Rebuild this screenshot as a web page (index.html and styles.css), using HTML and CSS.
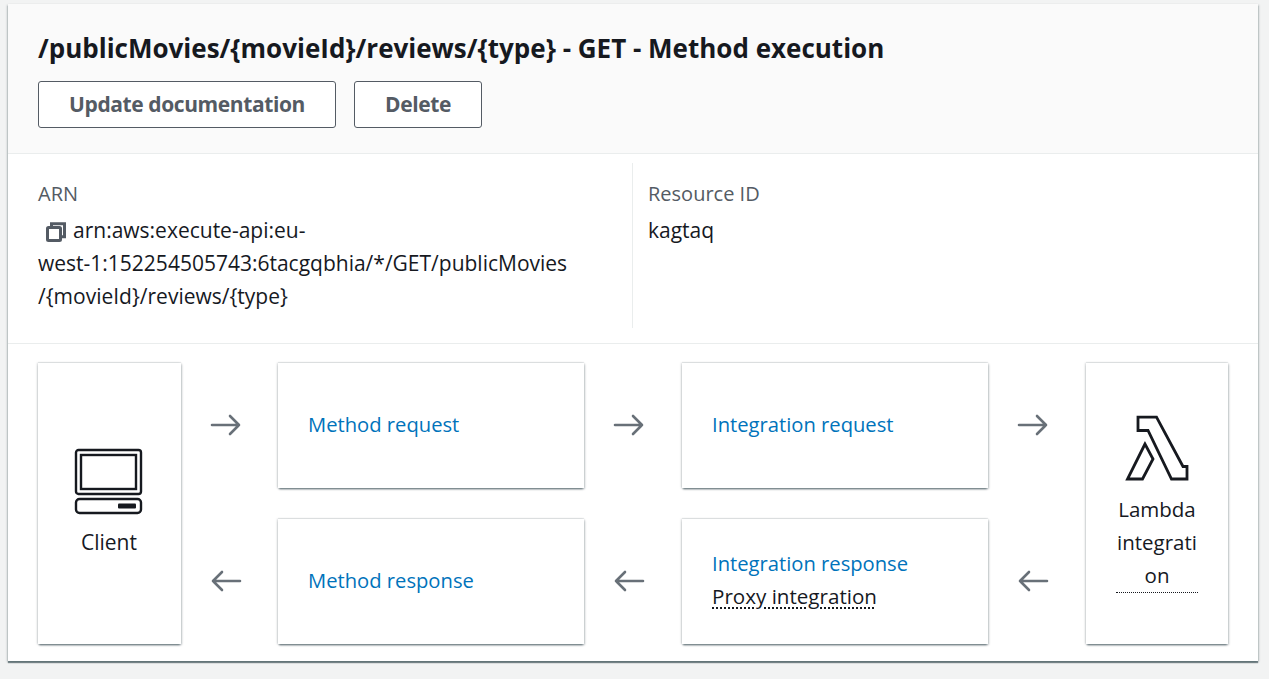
FILE: index.html
```html
<!DOCTYPE html>
<html lang="en">
<head>
  <meta charset="UTF-8">
  <title>Method execution</title>
  <link rel="stylesheet" href="styles.css">
</head>
<body>
  <div class="card">
    <div class="card-head">
      <h1>/publicMovies/{movieId}/reviews/{type} - GET - Method execution</h1>
      <div class="actions">
        <button class="btn btn-update">Update documentation</button>
        <button class="btn btn-delete">Delete</button>
      </div>
    </div>

    <div class="details">
      <div class="detail detail-arn">
        <div class="label">ARN</div>
        <div class="value">
          <svg class="copy-icon" width="22" height="22" viewBox="0 0 22 22" fill="none" stroke="#545b64" stroke-width="3">
            <rect x="2.500" y="6.500" width="13" height="13" rx="1"/>
            <path d="M6.500 6V2.800h13v13h-4"/>
          </svg>arn:aws:execute-api:eu-<br>west-1:152254505743:6tacgqbhia/*/GET/publicMovies<br>/{movieId}/reviews/{type}
        </div>
      </div>
      <div class="detail detail-id">
        <div class="label">Resource ID</div>
        <div class="value">kagtaq</div>
      </div>
    </div>

    <div class="flow">
      <div class="box box-side box-client">
        <svg class="client-icon" width="70" height="68" viewBox="0 0 70 68" fill="none" stroke="#16191f" stroke-width="2.4">
          <rect x="2" y="2" width="65" height="44" rx="2.500"/>
          <rect x="7" y="7" width="55" height="34"/>
          <rect x="2" y="51" width="65" height="14" rx="3.500"/>
          <rect x="44" y="55.500" width="18" height="5" rx="1" fill="#16191f" stroke="none"/>
        </svg>
        <span>Client</span>
      </div>

      <div class="arrow"><svg width="32" height="22" viewBox="0 0 32 22" fill="none" stroke="#687078" stroke-width="2.6" stroke-linecap="round" stroke-linejoin="round"><path d="M2 11h27M20 2l9 9-9 9"/></svg></div>
      <div class="box box-link"><a href="#">Method request</a></div>
      <div class="arrow"><svg width="32" height="22" viewBox="0 0 32 22" fill="none" stroke="#687078" stroke-width="2.6" stroke-linecap="round" stroke-linejoin="round"><path d="M2 11h27M20 2l9 9-9 9"/></svg></div>
      <div class="box box-link"><a href="#">Integration request</a></div>
      <div class="arrow"><svg width="32" height="22" viewBox="0 0 32 22" fill="none" stroke="#687078" stroke-width="2.6" stroke-linecap="round" stroke-linejoin="round"><path d="M2 11h27M20 2l9 9-9 9"/></svg></div>

      <div class="box box-side box-lambda">
        <svg class="lambda-icon" width="66" height="68" viewBox="0 0 66 68" fill="none" stroke="#16191f" stroke-width="2.8">
          <path d="M14 2.200H32.500L59 51.500H63V64H47.500L24 15.500H14z"/>
          <path d="M21 29 3.500 64H18.500L29 44z"/>
        </svg>
        <span class="dotted">Lambda integrati on</span>
      </div>

      <div class="arrow arrow-back"><svg width="32" height="22" viewBox="0 0 32 22" fill="none" stroke="#687078" stroke-width="2.6" stroke-linecap="round" stroke-linejoin="round"><path d="M30 11H3M12 2l-9 9 9 9"/></svg></div>
      <div class="box box-link"><a href="#">Method response</a></div>
      <div class="arrow"><svg width="32" height="22" viewBox="0 0 32 22" fill="none" stroke="#687078" stroke-width="2.6" stroke-linecap="round" stroke-linejoin="round"><path d="M30 11H3M12 2l-9 9 9 9"/></svg></div>
      <div class="box box-link box-stack">
        <a href="#">Integration response</a>
        <span class="proxy">Proxy integration</span>
      </div>
      <div class="arrow"><svg width="32" height="22" viewBox="0 0 32 22" fill="none" stroke="#687078" stroke-width="2.6" stroke-linecap="round" stroke-linejoin="round"><path d="M30 11H3M12 2l-9 9 9 9"/></svg></div>
    </div>
  </div>
</body>
</html>
```

FILE: styles.css
```css
* { box-sizing: border-box; }
body {
  margin: 0;
  height: 679px;
  padding: 4px 11px 0 8px;
  overflow: hidden;
  background-color: #f2f3f3;
  font-family: "Open Sans", "Liberation Sans", sans-serif;
  font-size: 21px;
  color: #16191f;
}
.card {
  height: 657px;
  background-color: white;
  box-shadow: 0 2px 1px 0 rgba(0, 28, 36, .45), 1px 1px 2px 0 rgba(0, 28, 36, .2), -1px 1px 2px 0 rgba(0, 28, 36, .2);
}
.card-head {
  height: 150px;
  padding: 28px 30px 0;
  background-color: #fafafa;
  border-bottom: 1px solid #eaeded;
}
h1 {
  margin: 0;
  font-size: 26px;
  line-height: 33px;
  font-weight: 700;
}
.actions {
  display: flex;
  gap: 18px;
  margin-top: 16px;
}
.btn {
  height: 47px;
  padding: 0 0 2px;
  background-color: white;
  border: 1px solid #545b64;
  border-radius: 3px;
  font-family: inherit;
  font-size: 21px;
  letter-spacing: -.4px;
  font-weight: 700;
  color: #545b64;
}
.btn-update { width: 298px; }
.btn-delete { width: 128px; }

.details {
  display: flex;
  height: 190px;
  padding-top: 9px;
  border-bottom: 1px solid #eaeded;
}
.detail { height: 165px; padding-top: 14px; }
.detail-arn { width: 625px; padding-left: 30px; border-right: 1px solid #eaeded; }
.detail-id { padding-left: 15px; }
.label { font-size: 20px; line-height: 33px; color: #545b64; }
.value { line-height: 33px; margin-top: 4px; }
.copy-icon { margin: 0 6px 0 7px; vertical-align: -5px; }

.flow {
  display: grid;
  grid-template-columns: 143px 97px 306px 98px 306px 98px 142px;
  grid-template-rows: 125px 125px;
  row-gap: 31px;
  padding: 19px 30px 0;
}
.box {
  background-color: white;
  box-shadow: 0 2px 2px -1px rgba(0, 28, 36, .55), 1px 1px 2px 0 rgba(0, 28, 36, .22), -1px 0 2px 0 rgba(0, 28, 36, .15), 0 -1px 1px 0 rgba(0, 28, 36, .08);
}
.box-side {
  grid-row: 1 / 3;
  display: flex;
  flex-direction: column;
  align-items: center;
  text-align: center;
}
.box-client { grid-column: 1; padding: 85px 1px 0 0; }
.box-client span { margin-top: 10px; line-height: 33px; }
.client-icon { display: block; }
.box-lambda { grid-column: 7; padding-top: 52px; }
.lambda-icon { display: block; }
.arrow-back { grid-column: 2; }
.box-link {
  display: flex;
  align-items: center;
  padding: 0 0 2px 30px;
  font-size: 20.2px;
  white-space: nowrap;
}
.box-stack {
  flex-direction: column;
  align-items: flex-start;
  justify-content: center;
  padding-bottom: 4px;
}
.box-link a { color: #0073bb; text-decoration: none; line-height: 33px; }
.proxy { font-size: 20.6px; line-height: 33px; text-decoration: underline dotted; text-underline-offset: 4px; }
.dotted {
  width: 82px;
  height: 100px;
  margin-top: 10px;
  font-size: 20.5px;
  line-height: 33px;
  word-break: break-all;
  border-bottom: 1px dotted #16191f;
}
.arrow {
  display: flex;
  align-items: center;
  justify-content: center;
  padding: 0 8px 2px 0;
}
```
